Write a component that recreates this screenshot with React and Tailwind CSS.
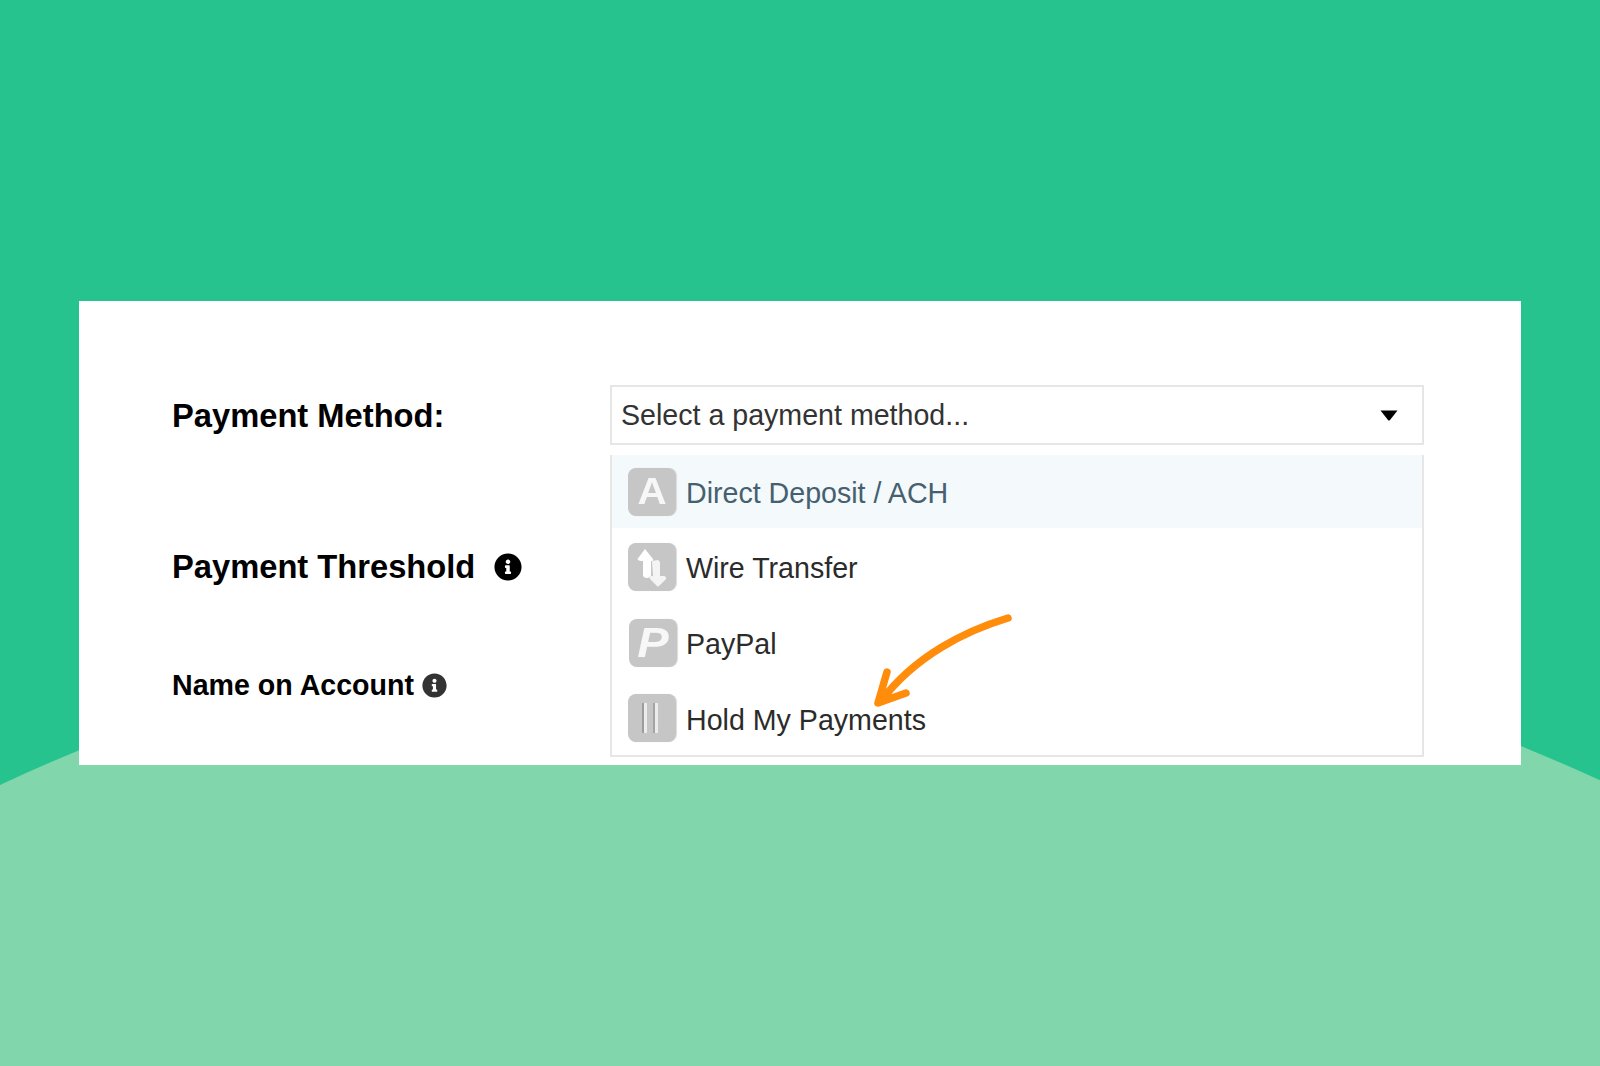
import React from "react";
import { FaInfoCircle } from "react-icons/fa";

const font = { fontFamily: '"Liberation Sans", Arial, sans-serif' };

function IconTile({ children, className = "" }) {
  return (
    <div className={`flex h-12 w-12 shrink-0 items-center justify-center rounded-lg bg-[#c6c6c6] shadow-[1px_0_1px_#dcdcdc] blur-[0.7px] ${className}`}>
      {children}
    </div>
  );
}

function Row({ icon, label, active, iconClass }) {
  return (
    <div className={`flex h-[73px] items-center pl-[16px] ${active ? "bg-[#f4f9fc] text-[#46606f]" : "text-[#2b2b2b]"}`}>
      <IconTile className={iconClass}>{icon}</IconTile>
      <span className="ml-[10px] mt-[3px] text-[28.6px] leading-none">{label}</span>
    </div>
  );
}

const WireIcon = (
  <svg width="40" height="42" viewBox="0 0 40 42" fill="#fff">
    <path d="M13 3 L21 13 Q21.5 15 19 15 L19 30 Q18 32 15 32 Q12 32 11 30 L11 15 Q6 15 5.5 13 Z" />
    <path d="M20 15 L26 14 Q28 15 28 17 L28 30 L32 30 Q35 31 34 33 L27 40 Q26 41 25 40 L18 33 Q17 31 19 30 L21 30 Z" fill="#f4f4f4" />
  </svg>
);

const PauseIcon = (
  <svg width="24" height="30" viewBox="0 0 24 30" className="-ml-[3px]">
    <rect x="3" y="0" width="2" height="30" fill="#9c9c9c" />
    <rect x="5" y="0" width="3" height="30" fill="#ececec" />
    <rect x="14" y="0" width="2" height="30" fill="#a4a4a4" />
    <rect x="16" y="0" width="3" height="30" fill="#ececec" />
  </svg>
);

export default function App() {
  return (
    <div className="relative h-[1066px] w-[1600px] overflow-hidden bg-[#27c38f]" style={font}>
      <div className="absolute left-[-1095px] top-[606px] h-[3800px] w-[3800px] rounded-full bg-[#82d6ab]" />

      <div className="absolute left-[79px] top-[301px] flex h-[464px] w-[1442px] bg-white pl-[93px] pt-[84px]">
        <div className="w-[438px] shrink-0 font-bold text-black">
          <div className="flex h-[62px] items-center text-[32.7px] leading-none">Payment Method:</div>
          <div className="mt-[89px] flex h-[62px] items-center text-[32.7px] leading-none">
            <span>Payment Threshold</span>
            <FaInfoCircle className="ml-[19px] h-[28px] w-[28px] text-black" />
          </div>
          <div className="mt-[59px] flex h-[56px] items-center text-[28.6px] leading-none">
            <span>Name on Account</span>
            <FaInfoCircle className="ml-[8px] h-[25px] w-[25px] text-[#333]" />
          </div>
        </div>

        <div className="w-[814px] shrink-0">
          <div className="flex h-[60px] items-center justify-between border-2 border-[#e6e6e6] pl-[9px] pr-[24px] text-[28.6px] leading-none text-[#333]">
            <span>Select a payment method...</span>
            <svg width="18" height="11" viewBox="0 0 18 11" className="mt-[1px]">
              <path d="M0.5 0.5 H17.5 L10 10 Q9 11 8 10 Z" fill="#000" />
            </svg>
          </div>
          <div className="mt-[10px] flex flex-col gap-[2.67px] border-x-2 border-b-2 border-[#e6e6e6]">
            <Row
              active
              label="Direct Deposit / ACH"
              icon={<span className="scale-x-[1.12] text-[36px] font-bold leading-none text-[#f7f7f7]">A</span>}
            />
            <Row label="Wire Transfer" icon={WireIcon} />
            <Row
              label="PayPal"
              iconClass="ml-[1px] mr-[-1px]"
              icon={<span className="scale-x-[1.12] text-[42px] font-bold italic leading-none text-[#f7f7f7]">P</span>}
            />
            <Row label="Hold My Payments" icon={PauseIcon} />
          </div>
        </div>

        <svg className="absolute left-[786px] top-[310px]" width="160" height="100" viewBox="0 0 160 100" fill="none">
          <path
            d="M143 7 C100 20 50 45 16 90 M22 61 L13 92 L41 82"
            stroke="#ff8c0a"
            strokeWidth="7.5"
            strokeLinecap="round"
            strokeLinejoin="round"
          />
        </svg>
      </div>
    </div>
  );
}
